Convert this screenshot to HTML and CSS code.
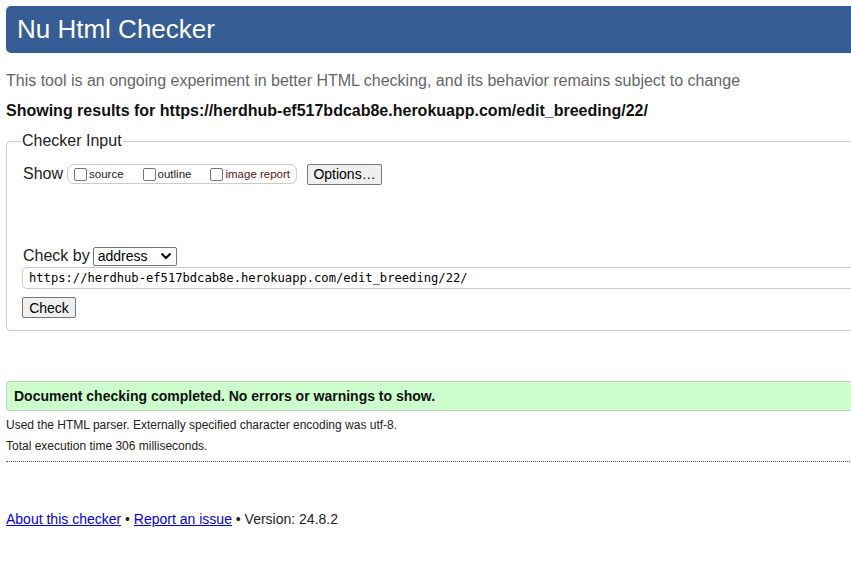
FILE: index.html
```html
<!DOCTYPE html>
<html lang="en">
<head>
<meta charset="utf-8">
<title>Nu Html Checker</title>
<link rel="stylesheet" href="styles.css">
</head>
<body>
<div class="page">
  <h1 class="title">Nu Html Checker</h1>
  <p class="intro">This tool is an ongoing experiment in better HTML checking, and its behavior remains subject to change</p>
  <p class="showing">Showing results for https://herdhub-ef517bdcab8e.herokuapp.com/edit_breeding/22/</p>
  <fieldset class="input-box">
    <legend class="legend">Checker Input</legend>
    <div class="show-row">
      <span class="label">Show</span>
      <span class="opts">
        <label class="opt"><span class="cb"></span>source</label>
        <label class="opt"><span class="cb"></span>outline</label>
        <label class="opt opt-img"><span class="cb"></span>image report</label>
      </span>
      <span class="btn btn-options">Options…</span>
    </div>
    <div class="checkby-row">
      <span class="label">Check by</span>
      <span class="select">address<svg class="chev" width="12" height="8" viewBox="0 0 12 8"><path d="M1.5 1.5 L6 6 L10.5 1.5" fill="none" stroke="#000" stroke-width="2"/></svg></span>
    </div>
    <div class="url">https://herdhub-ef517bdcab8e.herokuapp.com/edit_breeding/22/</div>
    <span class="btn btn-check">Check</span>
  </fieldset>
  <div class="success">Document checking completed. No errors or warnings to show.</div>
  <p class="details">Used the HTML parser. Externally specified character encoding was utf-8.</p>
  <p class="details details-time">Total execution time 306 milliseconds.</p>
  <hr class="rule">
  <p class="footer"><a href="#">About this checker</a> • <a href="#">Report an issue</a> • Version: 24.8.2</p>
</div>
</body>
</html>
```
FILE: styles.css
```css
html { overflow: hidden; }
body {
  margin: 0;
  font-family: "Liberation Sans", Arial, sans-serif;
  color: #222;
  background: #fff;
}
.page {
  width: 1100px;
  padding: 6px 0 0 6px;
}
.title {
  margin: 0;
  height: 47px;
  box-sizing: border-box;
  background: #365d95;
  color: #fff;
  font-weight: normal;
  font-size: 26px;
  line-height: 47px;
  padding-left: 11px;
  border-radius: 5px;
}
.intro {
  margin: 19px 0 0;
  font-size: 16px;
  line-height: 18px;
  color: #666;
}
.showing {
  margin: 12px 0 0;
  font-size: 16px;
  line-height: 18px;
  font-weight: bold;
  color: #111;
}
.input-box {
  margin: 12px 0 0;
  padding: 13px 16px 12px;
  border: 1px solid #ccc;
  border-radius: 4px;
  min-width: 0;
}
.legend {
  padding: 0 1px;
  margin-left: -2px;
  font-size: 16px;
  line-height: 18px;
  color: #222;
}
.label {
  font-size: 16px;
  color: #222;
}
.show-row {
  display: flex;
  align-items: center;
  height: 22px;
}
.opts {
  display: flex;
  align-items: center;
  margin-left: 4px;
  height: 20px;
  box-sizing: border-box;
  border: 1px solid #ccc;
  border-radius: 7px;
  padding: 0 6px 0 6px;
  width: 230px;
}
.opt {
  display: flex;
  align-items: flex-end;
  font-size: 11.5px;
  line-height: 13px;
  color: #222;
  margin-right: 19px;
}
.opt-img { color: #5a1424; margin-right: 0; }
.cb {
  width: 13px;
  height: 13px;
  box-sizing: border-box;
  border: 1px solid #767676;
  border-radius: 2px;
  margin-right: 2px;
  background: #fff;
}
.btn {
  display: inline-flex;
  align-items: center;
  justify-content: center;
  box-sizing: border-box;
  border: 1px solid #767676;
  border-radius: 2px;
  background: #efefef;
  font-size: 14px;
  color: #000;
  height: 21px;
}
.btn-options {
  margin-left: 10px;
  width: 75px;
}
.checkby-row {
  display: flex;
  align-items: center;
  margin-top: 61px;
  height: 20px;
}
.select {
  display: inline-flex;
  align-items: center;
  justify-content: space-between;
  box-sizing: border-box;
  margin-left: 3px;
  width: 84px;
  height: 19px;
  border: 1px solid #767676;
  border-radius: 2px;
  padding: 0 4px 0 4px;
  font-size: 14px;
  color: #000;
}
.url {
  margin-top: 1px;
  margin-left: -1px;
  height: 22px;
  box-sizing: border-box;
  border: 1px solid #ccc;
  border-radius: 5px;
  padding-left: 6px;
  font-family: "DejaVu Sans Mono", monospace;
  font-size: 12.15px;
  line-height: 20px;
  color: #000;
}
.btn-check {
  margin-top: 8px;
  margin-left: -1px;
  width: 54px;
}
.success {
  margin-top: 50px;
  height: 30px;
  box-sizing: border-box;
  background: #ccffcc;
  border: 1px solid #ccc;
  border-radius: 3px;
  padding-left: 7px;
  font-size: 14px;
  font-weight: bold;
  line-height: 28px;
  color: #111;
}
.details {
  margin: 7px 0 0;
  font-size: 12px;
  line-height: 15px;
  color: #222;
}
.details-time { margin-top: 6px; }
.rule {
  margin: 7px 0 0;
  border: 0;
  border-top: 1px dotted #666;
  height: 0;
}
.footer {
  margin: 49px 0 0;
  font-size: 14px;
  line-height: 17px;
  color: #222;
}
.footer a { color: #00e; }
```
